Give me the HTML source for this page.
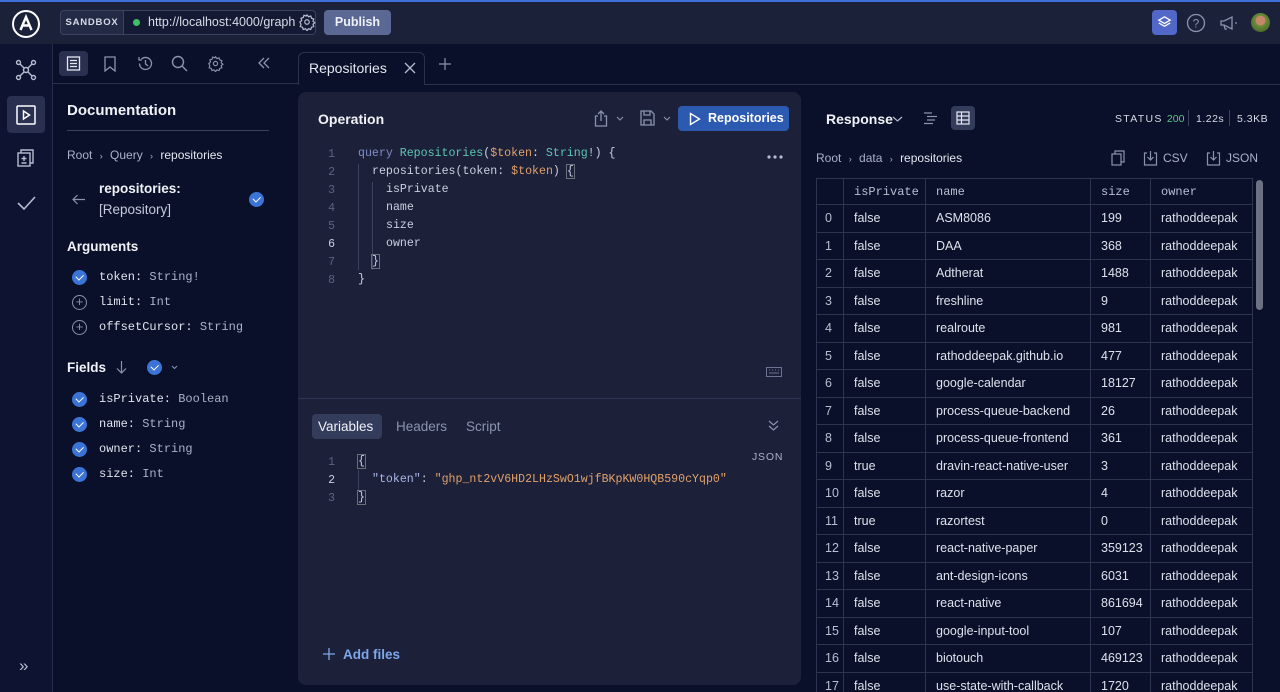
<!DOCTYPE html>
<html><head><meta charset="utf-8"><style>
*{box-sizing:border-box;margin:0;padding:0}
html,body{width:1280px;height:692px;overflow:hidden}
body{background:#0a1029;font-family:"Liberation Sans",sans-serif;color:#dfe3ee;position:relative}
.abs{position:absolute}
.mono{font-family:"Liberation Mono",monospace}
.top{left:0;top:0;width:1280px;height:44px;background:#1b2139;border-top:2px solid #3f6fd8}
.rail{left:0;top:44px;width:53px;height:648px;border-right:1px solid #262d48;background:#0d1330}
svg{position:absolute}
.op{left:298px;top:92px;width:503px;height:593px;background:#1c2139;border-radius:8px}
.ln{position:absolute;width:30px;text-align:right;font-size:11.5px;color:#5b6380;font-family:"Liberation Mono",monospace}
.cl{position:absolute;font-size:11.6px;color:#c9cfe0;font-family:"Liberation Mono",monospace;white-space:pre}
td,th{border:1px solid #2c3452;height:27.5px;font-size:12.5px;font-weight:normal;text-align:left;padding-left:10px;color:#dde1ec;white-space:nowrap}
table{border-collapse:collapse;position:absolute;left:816px;top:178px;table-layout:fixed}
th{height:26px;color:#b8bfd3;font-family:"Liberation Mono",monospace;font-size:12px}
td:first-child{padding-left:8px;color:#b8bfd3}
.chk{width:15px;height:15px;border-radius:50%;background:#3b74d6;position:absolute}
.chk:after{content:"";position:absolute;left:4px;top:3.5px;width:6px;height:3.5px;border-left:1.6px solid #fff;border-bottom:1.6px solid #fff;transform:rotate(-45deg)}
.plus{width:15px;height:15px;border-radius:50%;border:1px solid #8a92ab;position:absolute;color:#8a92ab;font-size:13px;line-height:12px;text-align:center}
.f{font-size:12px;color:#dfe3ee;font-family:"Liberation Mono",monospace}
.f b{font-weight:normal;color:#aab1c6}
.k{color:#7f8cc8}.t{color:#5ec5b5}.v{color:#e0a06a}
.br{outline:1px solid #6a6f7a}
</style></head><body>
<div class="abs top"></div>
<svg style="left:10px;top:8px" width="32" height="32" viewBox="0 0 32 32"><circle cx="16" cy="16" r="13" fill="none" stroke="#fff" stroke-width="2"/><path d="M10.5 22 L16 9 L21.5 22 M12.7 17.5 H19.3" fill="none" stroke="#fff" stroke-width="2.4"/></svg>
<div class="abs" style="left:60px;top:10px;width:256px;height:25px;border:1px solid #3a4260;border-radius:4px;background:#141a33"></div>
<div class="abs" style="left:60px;top:10px;width:64px;height:25px;border:1px solid #3a4260;border-radius:4px 0 0 4px;background:#232a45;font-size:9.5px;font-weight:bold;letter-spacing:.8px;line-height:23px;text-align:center;color:#d7dbe7">SANDBOX</div>
<div class="abs" style="left:133px;top:19px;width:7px;height:7px;border-radius:50%;background:#3fbf6a"></div>
<div class="abs" style="left:148px;top:15px;font-size:12.5px;color:#d7dbe7">http://localhost:4000/graph</div>
<svg style="left:298px;top:13px" width="18" height="18" viewBox="0 0 24 24" fill="none" stroke="#b6bdd0" stroke-width="1.6"><circle cx="12" cy="12" r="3"/><path d="M12 2.5l2 2.5 3-1 1 3 3 1-1 3 2.5 2-2.5 2 1 3-3 1-1 3-3-1-2 2.5-2-2.5-3 1-1-3-3-1 1-3L2.5 12 5 10 4 7l3-1 1-3 3 1z"/></svg>
<div class="abs" style="left:324px;top:10px;width:67px;height:25px;border-radius:4px;background:#5a6893;font-size:12.5px;font-weight:bold;color:#eef1f8;line-height:25px;text-align:center">Publish</div>
<div class="abs" style="left:1152px;top:10px;width:25px;height:25px;border-radius:4px;background:#5168c8"></div>
<svg style="left:1156px;top:14px" width="17" height="17" viewBox="0 0 18 18" fill="none" stroke="#fff" stroke-width="1.4"><path d="M9 3 L15 6.5 L9 10 L3 6.5Z M3 9.5 L9 13 L15 9.5"/></svg>
<svg style="left:1186px;top:13px" width="20" height="20" viewBox="0 0 20 20"><circle cx="10" cy="10" r="8.5" fill="none" stroke="#8a93ad" stroke-width="1.3"/><text x="10" y="14.5" font-size="12" fill="#8a93ad" text-anchor="middle" font-family="Liberation Sans">?</text></svg>
<svg style="left:1218px;top:13px" width="22" height="20" viewBox="0 0 22 20" fill="none" stroke="#8a93ad" stroke-width="1.3"><path d="M3 8v4h3l8 4V4L6 8z M6 12l1 4h2 M17 10h2"/></svg>
<div class="abs" style="left:1251px;top:13px;width:19px;height:19px;border-radius:50%;background:radial-gradient(circle at 50% 40%,#c9876a 0 30%,#6a8c3a 35%,#3e5a22)"></div>

<div class="abs rail"></div>
<svg style="left:15px;top:59px" width="22" height="22" viewBox="0 0 22 22" fill="none" stroke="#b6bdd0" stroke-width="1.4"><circle cx="11" cy="11" r="2.5"/><circle cx="3.5" cy="3.5" r="2"/><circle cx="18.5" cy="3.5" r="2"/><circle cx="3.5" cy="18.5" r="2"/><circle cx="18.5" cy="18.5" r="2"/><path d="M5 5l4 4M17 5l-4 4M5 17l4-4M17 17l-4-4"/></svg>
<div class="abs" style="left:7px;top:96px;width:38px;height:37px;border-radius:4px;background:#2a3150"></div>
<svg style="left:15px;top:104px" width="22" height="22" viewBox="0 0 22 22" fill="none" stroke="#fff" stroke-width="1.5"><rect x="2" y="2" width="18" height="18" rx="1"/><path d="M8.5 7v8l6-4z"/></svg>
<svg style="left:16px;top:148px" width="20" height="20" viewBox="0 0 20 20" fill="none" stroke="#b6bdd0" stroke-width="1.4"><rect x="2" y="5" width="12" height="13"/><path d="M5 5V2h12v13h-3 M8 8v5M5.5 10.5h5M5.5 15h5"/></svg>
<svg style="left:15px;top:194px" width="22" height="18" viewBox="0 0 22 18" fill="none" stroke="#b6bdd0" stroke-width="1.6"><path d="M3 9l6 6L20 3"/></svg>
<div class="abs" style="left:19px;top:656px;font-size:17px;color:#b6bdd0">»</div>

<div class="abs" style="left:59px;top:51px;width:29px;height:25px;border-radius:4px;background:#2a3150"></div>
<svg style="left:66px;top:56px" width="15" height="15" viewBox="0 0 15 15" fill="none" stroke="#e4e7f0" stroke-width="1.3"><rect x="1.5" y="1" width="12" height="13"/><path d="M4 4.5h7M4 7.5h7M4 10.5h7"/></svg>
<svg style="left:103px;top:56px" width="14" height="16" viewBox="0 0 14 16" fill="none" stroke="#8a93ad" stroke-width="1.3"><path d="M2 1h10v14l-5-4-5 4z"/></svg>
<svg style="left:137px;top:55px" width="17" height="17" viewBox="0 0 17 17" fill="none" stroke="#8a93ad" stroke-width="1.3"><path d="M2.5 8.5a6 6 0 1 0 2-4.5M2 2v3h3M8.5 5v4l2.5 2"/></svg>
<svg style="left:171px;top:55px" width="17" height="17" viewBox="0 0 17 17" fill="none" stroke="#8a93ad" stroke-width="1.4"><circle cx="7" cy="7" r="5.5"/><path d="M11 11l5 5"/></svg>
<svg style="left:207px;top:55px" width="17" height="17" viewBox="0 0 24 24" fill="none" stroke="#8a93ad" stroke-width="1.6"><circle cx="12" cy="12" r="3"/><path d="M12 2.5l2 2.5 3-1 1 3 3 1-1 3 2.5 2-2.5 2 1 3-3 1-1 3-3-1-2 2.5-2-2.5-3 1-1-3-3-1 1-3L2.5 12 5 10 4 7l3-1 1-3 3 1z"/></svg>
<svg style="left:257px;top:57px" width="14" height="12" viewBox="0 0 14 12" fill="none" stroke="#8a93ad" stroke-width="1.3"><path d="M7 1L2 6l5 5M12 1L7 6l5 5"/></svg>
<div class="abs" style="left:53px;top:83px;width:245px;border-top:1px solid #2a3150"></div>

<div class="abs" style="left:298px;top:52px;width:127px;height:33px;border:1px solid #2a3150;border-bottom:none;border-radius:6px 6px 0 0;background:#0a1029"></div>
<div class="abs" style="left:425px;top:84px;width:855px;border-top:1px solid #2a3150"></div>
<div class="abs" style="left:309px;top:60px;font-size:14px;color:#e4e7f0">Repositories</div>
<svg style="left:404px;top:62px" width="12" height="12" viewBox="0 0 12 12" stroke="#b6bdd0" stroke-width="1.3"><path d="M1 1l10 10M11 1L1 11"/></svg>
<svg style="left:439px;top:58px" width="12" height="12" viewBox="0 0 12 12" stroke="#8a93ad" stroke-width="1.2"><path d="M6 0v12M0 6h12"/></svg>

<div class="abs" style="left:67px;top:102px;font-size:15px;font-weight:bold;color:#f0f2f7">Documentation</div>
<div class="abs" style="left:67px;top:130px;width:202px;border-top:1px solid #3a4260"></div>
<div class="abs" style="left:67px;top:148px;font-size:12px;color:#aab1c6">Root <span style="font-size:9px;margin:0 4px">›</span> Query <span style="font-size:9px;margin:0 4px">›</span> <span style="color:#e4e7f0">repositories</span></div>
<svg style="left:72px;top:194px" width="13" height="11" viewBox="0 0 13 11" fill="none" stroke="#8a93ad" stroke-width="1.2"><path d="M13 5.5H1M5.5 1L1 5.5 5.5 10"/></svg>
<div class="abs" style="left:99px;top:181px;font-size:13.5px;font-weight:bold;color:#f0f2f7">repositories:</div>
<div class="abs" style="left:99px;top:202px;font-size:13.5px;color:#c4cadb">[Repository]</div>
<div class="chk" style="left:249px;top:192px"></div>
<div class="abs" style="left:67px;top:239px;font-size:13.5px;font-weight:bold;color:#f0f2f7">Arguments</div>
<div class="chk" style="left:72px;top:270px"></div><div class="abs f" style="left:99px;top:270px">token:<b> String!</b></div>
<div class="plus" style="left:72px;top:295px">+</div><div class="abs f" style="left:99px;top:295px">limit:<b> Int</b></div>
<div class="plus" style="left:72px;top:320px">+</div><div class="abs f" style="left:99px;top:320px">offsetCursor:<b> String</b></div>
<div class="abs" style="left:67px;top:360px;font-size:13.5px;font-weight:bold;color:#f0f2f7">Fields</div>
<svg style="left:116px;top:361px" width="11" height="13" viewBox="0 0 11 13" fill="none" stroke="#8a93ad" stroke-width="1.2"><path d="M5.5 0v12M1 7.5l4.5 4.5L10 7.5"/></svg>
<div class="chk" style="left:147px;top:360px"></div>
<svg style="left:171px;top:365px" width="7" height="5" viewBox="0 0 7 5" fill="none" stroke="#8a93ad" stroke-width="1"><path d="M1 1l2.5 2.5L6 1"/></svg>
<div class="chk" style="left:72px;top:392px"></div><div class="abs f" style="left:99px;top:392px">isPrivate:<b> Boolean</b></div>
<div class="chk" style="left:72px;top:417px"></div><div class="abs f" style="left:99px;top:417px">name:<b> String</b></div>
<div class="chk" style="left:72px;top:442px"></div><div class="abs f" style="left:99px;top:442px">owner:<b> String</b></div>
<div class="chk" style="left:72px;top:467px"></div><div class="abs f" style="left:99px;top:467px">size:<b> Int</b></div>

<div class="abs op"></div>
<div class="abs" style="left:318px;top:111px;font-size:14px;font-weight:bold;color:#f0f2f7">Operation</div>
<svg style="left:594px;top:110px" width="14" height="17" viewBox="0 0 14 17" fill="none" stroke="#8a93ad" stroke-width="1.3"><path d="M4 6H1.5v10h11V6H10M7 11V1M4 4l3-3 3 3"/></svg>
<svg style="left:616px;top:116px" width="8" height="5" viewBox="0 0 8 5" fill="none" stroke="#8a93ad" stroke-width="1.1"><path d="M1 1l3 3 3-3"/></svg>
<svg style="left:640px;top:110px" width="15" height="16" viewBox="0 0 15 16" fill="none" stroke="#8a93ad" stroke-width="1.3"><path d="M1 1h10l3 3v11H1z M4 1v4h6V1 M4 15v-5h7v5"/></svg>
<svg style="left:663px;top:116px" width="8" height="5" viewBox="0 0 8 5" fill="none" stroke="#8a93ad" stroke-width="1.1"><path d="M1 1l3 3 3-3"/></svg>
<div class="abs" style="left:678px;top:106px;width:111px;height:25px;border-radius:4px;background:#2c5ab0"></div>
<svg style="left:689px;top:112px" width="12" height="14" viewBox="0 0 12 14" fill="none" stroke="#fff" stroke-width="1.4"><path d="M1.5 1.5v11l9-5.5z"/></svg>
<div class="abs" style="left:708px;top:111px;font-size:12.5px;font-weight:bold;color:#fff">Repositories</div>
<svg style="left:767px;top:155px" width="16" height="4" viewBox="0 0 16 4" fill="#b6bdd0"><circle cx="2" cy="2" r="1.6"/><circle cx="8" cy="2" r="1.6"/><circle cx="14" cy="2" r="1.6"/></svg>
<div class="abs" style="left:358px;top:164px;height:106px;border-left:1px solid #3a4260"></div>
<div class="abs" style="left:372px;top:182px;height:88px;border-left:1px solid #3a4260"></div>
<div class="ln" style="left:305px;top:148px">1</div><div class="cl" style="left:358px;top:147px"><span class="k">query</span> <span class="t">Repositories</span>(<span class="v">$token</span>: <span class="t">String</span>!) {</div>
<div class="ln" style="left:305px;top:166px">2</div><div class="cl" style="left:372px;top:165px">repositories(token: <span class="v">$token</span>) <span class="br">{</span></div>
<div class="ln" style="left:305px;top:184px">3</div><div class="cl" style="left:386px;top:183px">isPrivate</div>
<div class="ln" style="left:305px;top:202px">4</div><div class="cl" style="left:386px;top:201px">name</div>
<div class="ln" style="left:305px;top:220px">5</div><div class="cl" style="left:386px;top:219px">size</div>
<div class="ln" style="left:305px;top:238px;color:#c9cfe0">6</div><div class="cl" style="left:386px;top:237px">owner</div>
<div class="ln" style="left:305px;top:256px">7</div><div class="cl" style="left:372px;top:255px"><span class="br">}</span></div>
<div class="ln" style="left:305px;top:274px">8</div><div class="cl" style="left:358px;top:273px">}</div>
<svg style="left:766px;top:367px" width="16" height="10" viewBox="0 0 16 10" fill="none" stroke="#6b7390" stroke-width="1"><rect x="0.5" y="0.5" width="15" height="9"/><path d="M3 3h1M6 3h1M9 3h1M12 3h1M3 6h10"/></svg>
<div class="abs" style="left:298px;top:398px;width:503px;border-top:1px solid #2f3653"></div>
<div class="abs" style="left:312px;top:414px;width:70px;height:25px;border-radius:4px;background:#343c5c"></div>
<div class="abs" style="left:318px;top:419px;font-size:13.5px;color:#f0f2f7">Variables</div>
<div class="abs" style="left:396px;top:419px;font-size:13.5px;color:#8a93ad">Headers</div>
<div class="abs" style="left:466px;top:419px;font-size:13.5px;color:#8a93ad">Script</div>
<svg style="left:768px;top:420px" width="11" height="11" viewBox="0 0 11 11" fill="none" stroke="#8a93ad" stroke-width="1.2"><path d="M1 1l4.5 4 4.5-4M1 6l4.5 4 4.5-4"/></svg>
<div class="abs" style="left:752px;top:451px;font-size:10.5px;color:#aab1c6;letter-spacing:.8px">JSON</div>
<div class="abs" style="left:358px;top:470px;height:20px;border-left:1px solid #3a4260"></div>
<div class="ln" style="left:305px;top:456px">1</div><div class="cl" style="left:358px;top:455px"><span class="br">{</span></div>
<div class="ln" style="left:305px;top:474px;color:#c9cfe0">2</div><div class="cl" style="left:372px;top:473px"><span style="color:#a9b6e6">"token"</span>: <span class="v">"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"</span></div>
<div class="ln" style="left:305px;top:492px">3</div><div class="cl" style="left:358px;top:491px"><span class="br">}</span></div>
<svg style="left:323px;top:648px" width="12" height="12" viewBox="0 0 12 12" stroke="#7ea6ea" stroke-width="1.3"><path d="M6 0v12M0 6h12"/></svg>
<div class="abs" style="left:343px;top:647px;font-size:13.5px;font-weight:bold;color:#7ea6ea">Add files</div>

<div class="abs" style="left:826px;top:111px;font-size:14px;font-weight:bold;color:#f0f2f7">Response</div>
<svg style="left:892px;top:116px" width="11" height="6" viewBox="0 0 11 6" fill="none" stroke="#b6bdd0" stroke-width="1.2"><path d="M1 1l4.5 4L10 1"/></svg>
<svg style="left:923px;top:112px" width="15" height="13" viewBox="0 0 15 13" fill="none" stroke="#8a93ad" stroke-width="1.2"><path d="M1 1h8M4 4.5h10M4 8h8M1 11.5h9"/></svg>
<div class="abs" style="left:951px;top:106px;width:24px;height:24px;border-radius:4px;background:#343c5c"></div>
<svg style="left:956px;top:111px" width="14" height="14" viewBox="0 0 14 14" fill="none" stroke="#e4e7f0" stroke-width="1.2"><rect x="1" y="1" width="12" height="12"/><path d="M1 5h12M1 9h12M5.5 1v12"/></svg>
<div class="abs" style="left:1115px;top:113px;font-size:10.5px;letter-spacing:1.3px;color:#d7dbe7">STATUS <span style="color:#5ec588;letter-spacing:0">200</span></div>
<div class="abs" style="left:1188px;top:110px;height:16px;border-left:1px solid #3a4260"></div>
<div class="abs" style="left:1196px;top:113px;font-size:10.5px;color:#d7dbe7;letter-spacing:.5px">1.22s</div>
<div class="abs" style="left:1229px;top:110px;height:16px;border-left:1px solid #3a4260"></div>
<div class="abs" style="left:1237px;top:113px;font-size:10.5px;color:#d7dbe7;letter-spacing:.5px">5.3KB</div>
<div class="abs" style="left:816px;top:151px;font-size:12px;color:#aab1c6">Root <span style="font-size:9px;margin:0 4px">›</span> data <span style="font-size:9px;margin:0 4px">›</span> <span style="color:#e4e7f0">repositories</span></div>
<svg style="left:1111px;top:150px" width="15" height="16" viewBox="0 0 15 16" fill="none" stroke="#8a93ad" stroke-width="1.2"><rect x="1" y="4" width="9" height="11"/><path d="M4 4V1h9v11h-3"/></svg>
<svg style="left:1143px;top:150px" width="15" height="16" viewBox="0 0 15 16" fill="none" stroke="#8a93ad" stroke-width="1.2"><path d="M4 3H1.5v12h12V3H11M7.5 1v9M4.5 7l3 3 3-3"/></svg>
<div class="abs" style="left:1163px;top:151px;font-size:12px;color:#aab1c6">CSV</div>
<svg style="left:1206px;top:150px" width="15" height="16" viewBox="0 0 15 16" fill="none" stroke="#8a93ad" stroke-width="1.2"><path d="M4 3H1.5v12h12V3H11M7.5 1v9M4.5 7l3 3 3-3"/></svg>
<div class="abs" style="left:1226px;top:151px;font-size:12px;color:#aab1c6">JSON</div>
<div class="abs" style="left:1256px;top:180px;width:7px;height:130px;border-radius:4px;background:#6b7082"></div>
<table>
<colgroup><col style="width:27px"><col style="width:82px"><col style="width:165px"><col style="width:60px"><col style="width:102px"></colgroup>
<tr><th></th><th>isPrivate</th><th>name</th><th>size</th><th>owner</th></tr>
<tr><td>0</td><td>false</td><td>ASM8086</td><td>199</td><td>rathoddeepak</td></tr>
<tr><td>1</td><td>false</td><td>DAA</td><td>368</td><td>rathoddeepak</td></tr>
<tr><td>2</td><td>false</td><td>Adtherat</td><td>1488</td><td>rathoddeepak</td></tr>
<tr><td>3</td><td>false</td><td>freshline</td><td>9</td><td>rathoddeepak</td></tr>
<tr><td>4</td><td>false</td><td>realroute</td><td>981</td><td>rathoddeepak</td></tr>
<tr><td>5</td><td>false</td><td>rathoddeepak.github.io</td><td>477</td><td>rathoddeepak</td></tr>
<tr><td>6</td><td>false</td><td>google-calendar</td><td>18127</td><td>rathoddeepak</td></tr>
<tr><td>7</td><td>false</td><td>process-queue-backend</td><td>26</td><td>rathoddeepak</td></tr>
<tr><td>8</td><td>false</td><td>process-queue-frontend</td><td>361</td><td>rathoddeepak</td></tr>
<tr><td>9</td><td>true</td><td>dravin-react-native-user</td><td>3</td><td>rathoddeepak</td></tr>
<tr><td>10</td><td>false</td><td>razor</td><td>4</td><td>rathoddeepak</td></tr>
<tr><td>11</td><td>true</td><td>razortest</td><td>0</td><td>rathoddeepak</td></tr>
<tr><td>12</td><td>false</td><td>react-native-paper</td><td>359123</td><td>rathoddeepak</td></tr>
<tr><td>13</td><td>false</td><td>ant-design-icons</td><td>6031</td><td>rathoddeepak</td></tr>
<tr><td>14</td><td>false</td><td>react-native</td><td>861694</td><td>rathoddeepak</td></tr>
<tr><td>15</td><td>false</td><td>google-input-tool</td><td>107</td><td>rathoddeepak</td></tr>
<tr><td>16</td><td>false</td><td>biotouch</td><td>469123</td><td>rathoddeepak</td></tr>
<tr><td>17</td><td>false</td><td>use-state-with-callback</td><td>1720</td><td>rathoddeepak</td></tr>
</table>
</body></html>
